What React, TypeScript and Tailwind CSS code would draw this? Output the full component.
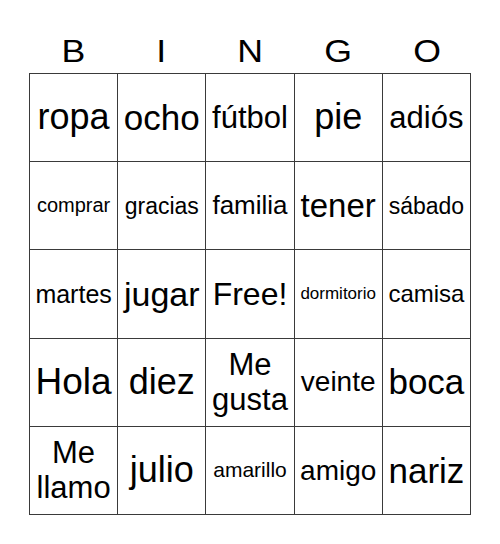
const LETTERS = ['B', 'I', 'N', 'G', 'O'];

// each cell: label + font size class (text is fitted to the cell width)
const CELLS: { text: string; size: string }[] = [
  { text: 'ropa', size: 'text-[36px]' },
  { text: 'ocho', size: 'text-[35px]' },
  { text: 'fútbol', size: 'text-[31px]' },
  { text: 'pie', size: 'text-[36px]' },
  { text: 'adiós', size: 'text-[31px]' },

  { text: 'comprar', size: 'text-[20px]' },
  { text: 'gracias', size: 'text-[23px]' },
  { text: 'familia', size: 'text-[26px]' },
  { text: 'tener', size: 'text-[33px]' },
  { text: 'sábado', size: 'text-[23px]' },

  { text: 'martes', size: 'text-[25px]' },
  { text: 'jugar', size: 'text-[34px]' },
  { text: 'Free!', size: 'text-[32px]' },
  { text: 'dormitorio', size: 'text-[17px]' },
  { text: 'camisa', size: 'text-[24px]' },

  { text: 'Hola', size: 'text-[37px]' },
  { text: 'diez', size: 'text-[36px]' },
  { text: 'Me gusta', size: 'text-[31px]' },
  { text: 'veinte', size: 'text-[28px]' },
  { text: 'boca', size: 'text-[35px]' },

  { text: 'Me llamo', size: 'text-[31px]' },
  { text: 'julio', size: 'text-[36px]' },
  { text: 'amarillo', size: 'text-[21px]' },
  { text: 'amigo', size: 'text-[28px]' },
  { text: 'nariz', size: 'text-[35px]' },
];

export default function App() {
  return (
    <div className="w-[500px] h-[544px] bg-white text-black font-['Liberation_Sans',Arial,sans-serif]">
      <div className="mx-auto w-[442px] pt-[36px]">
        {/* Header */}
        <div className="grid grid-cols-5 h-[31px] mb-[6px]">
          {LETTERS.map((l) => (
            <div key={l} className="flex justify-center text-[31px] leading-none">
              <span className="inline-block scale-x-[1.15]">{l}</span>
            </div>
          ))}
        </div>

        {/* Card */}
        <div className="grid grid-cols-5 border-t border-l border-[#3a3a3a]">
          {CELLS.map((c, i) => (
            <div
              key={i}
              className={`h-[88.2px] flex items-center justify-center text-center border-r border-b border-[#3a3a3a] px-1 leading-[1.13] ${c.size}`}
            >
              {c.text.includes(' ') ? (
                <span>
                  {c.text.split(' ').map((w) => (
                    <span key={w} className="block">{w}</span>
                  ))}
                </span>
              ) : (
                <span className="whitespace-nowrap">{c.text}</span>
              )}
            </div>
          ))}
        </div>
      </div>
    </div>
  );
}
